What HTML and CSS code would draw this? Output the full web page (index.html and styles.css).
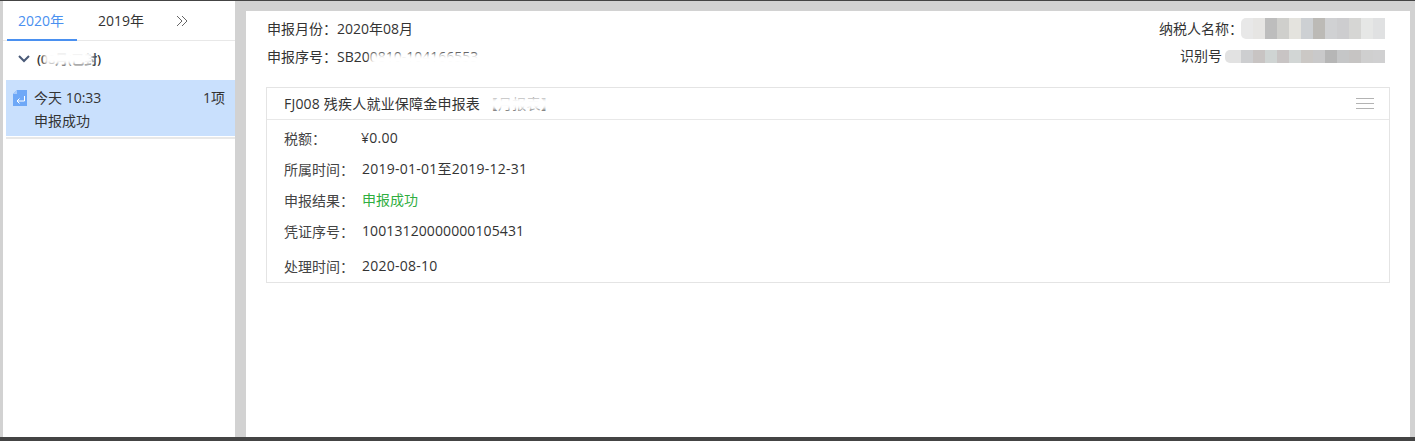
FILE: index.html
```html
<!DOCTYPE html>
<html lang="zh-CN">
<head>
    <meta charset="UTF-8">
    <title>申报记录</title>
    <meta name="viewport" content="width=device-width">
    <link rel="stylesheet" href="styles.css">
</head>
<body>
    <div class="page">
        <aside class="side">
            <div class="tabs">
                <span class="tab tab-on">2020年</span>
                <span class="tab tab-next">2019年</span>
                <svg class="tab-more" width="12" height="12" viewBox="0 0 12 12">
                    <path d="M1 1l5 5-5 5M6 1l5 5-5 5" fill="none" stroke="#666" stroke-width="1"/>
                </svg>
            </div>
            <div class="group">
                <svg class="group-arrow" width="12" height="8" viewBox="0 0 12 8">
                    <path d="M1 1l5 5 5-5" fill="none" stroke="#4a5a78" stroke-width="2"/>
                </svg>
                <span class="group-name">(08月(已封)</span>
                <i class="smear smear-group"></i>
            </div>
            <div class="item">
                <svg class="item-icon" width="14" height="16" viewBox="0 0 14 16">
                    <path d="M4 0h10v16H0V4z" fill="#6ea8f7"/>
                    <path d="M0 4h4V0z" fill="#a9cbfa"/>
                    <path d="M11.5 6v5H4M6.5 8.5L4 11l2.5 2.5" fill="none" stroke="#fff" stroke-width="1"/>
                </svg>
                <div class="item-row">
                    <span>今天 10:33</span>
                    <span>1项</span>
                </div>
                <div class="item-sub">申报成功</div>
            </div>
        </aside>
        <main class="main">
            <div class="head">
                <div class="head-col">
                    <div class="head-line">申报月份<span class="colon">：</span>2020年08月</div>
                    <div class="head-line head-serial">申报序号<span class="colon">：</span>SB200810-104166553<i class="smear smear-serial"></i></div>
                </div>
                <div class="head-col head-right">
                    <div class="head-line">纳税人名称<span class="colon">：</span><span class="mosaic mosaic-name">
                            <b style="background:#e8e8e8"></b><b style="background:#e6e5e3"></b><b style="background:#bdbdbd"></b><b style="background:#cfcfcc"></b><b style="background:#e4e3de"></b><b style="background:#cdd0d3"></b><b style="background:#bcbab6"></b><b style="background:#d0d1d3"></b><b style="background:#cdcdcf"></b><b style="background:#d6d6d4"></b><b style="background:#e6e7e6"></b><b style="background:#e0e1e2"></b>
                        </span></div>
                    <div class="head-line">识别号<span class="mosaic mosaic-id">
                            <b style="background:#e2e2e2"></b><b style="background:#cdced0"></b><b style="background:#c8c4c3"></b><b style="background:#cfd4d3"></b><b style="background:#c8c4c4"></b><b style="background:#d2d6d5"></b><b style="background:#cbc8c5"></b><b style="background:#c9c9ca"></b><b style="background:#b6b6b6"></b><b style="background:#c5c6c7"></b><b style="background:#c6c4c3"></b><b style="background:#cfcfcf"></b><b style="background:#d0d0d1"></b>
                        </span></div>
                </div>
            </div>
            <section class="card">
                <div class="card-title">
                    <span class="card-name">FJ008 残疾人就业保障金申报表 【月报表】<i class="smear smear-title"></i></span>
                    <span class="card-menu"><b></b><b></b><b></b></span>
                </div>
                <div class="card-body">
                    <div class="row row-tax"><span class="row-key">税额<span class="colon">：</span></span><span class="row-val">¥0.00</span></div>
                    <div class="row"><span class="row-key">所属时间<span class="colon">：</span></span><span class="row-val">2019-01-01至2019-12-31</span></div>
                    <div class="row"><span class="row-key">申报结果<span class="colon">：</span></span><span class="ok">申报成功</span></div>
                    <div class="row"><span class="row-key">凭证序号<span class="colon">：</span></span><span class="row-no">10013120000000105431</span></div>
                    <div class="row row-last"><span class="row-key">处理时间<span class="colon">：</span></span><span class="row-val">2020-08-10</span></div>
                </div>
            </section>
        </main>
    </div>
</body>
</html>
```

FILE: styles.css
```css
*,
*::after,
*::before{
    padding: 0;
    margin: 0;
    box-sizing: border-box;
}
html{
    font: normal 14px/20px "Open Sans", "Noto Sans CJK SC", sans-serif;
    color: #333;
}
body{
    width: 1415px;
    height: 441px;
    overflow: hidden;
    background-color: #d2d2d2;
}
.page{
    height: 441px;
    display: flex;
    padding: 0 5px 0 3px;
    border-top: 1px solid #444;
    border-bottom: 4px solid #444;
}
/* the centred colon only comes with the TC cut */
.colon{
    font-family: "Noto Sans CJK TC", sans-serif;
}
.side{
    width: 232px;
    background-color: #fff;
    margin-right: 11px;
    padding-top: 1px;
}
.tabs{
    height: 39px;
    display: flex;
    align-items: center;
    padding-left: 4px;
    border-bottom: 1px solid #e8e8e8;
}
.tab{
    width: 70px;
    height: 39px;
    line-height: 38px;
    text-align: center;
}
.tab-on{
    color: #4a90f0;
    border-bottom: 2px solid #4a90f0;
    padding-right: 2px;
}
.tab-next{
    margin-left: 9px;
}
.tab-more{
    margin-left: 20px;
}
.group{
    position: relative;
    height: 39px;
    display: flex;
    align-items: center;
    padding: 0 0 4px 15px;
    font-size: 13px;
    font-weight: 600;
    letter-spacing: -0.3px;
}
.group-arrow{
    margin-right: 7px;
}
.smear{
    position: absolute;
    background-color: #fff;
    filter: blur(2px);
}
.smear-group{
    left: 41px;
    top: 10px;
    width: 49px;
    height: 14px;
}
.item{
    position: relative;
    margin-left: 3px;
    height: 57px;
    padding: 8px 10px 0 28px;
    background-color: #c9e0fd;
    border-bottom: 1px solid #fff;
    box-shadow: 0 2px 0 #e8e8e8;
}
.item-icon{
    position: absolute;
    left: 7px;
    top: 10px;
}
.item-row{
    display: flex;
    justify-content: space-between;
}
.item-sub{
    margin-top: 3px;
}
.main{
    flex: 1;
    margin-top: 10px;
    background-color: #fff;
    padding: 7px 20px 0;
}
.head{
    display: flex;
    justify-content: space-between;
    padding-right: 5px;
}
.head-col{
    padding-left: 1px;
}
.head-right{
    text-align: right;
}
.head-line{
    position: relative;
    height: 28px;
    line-height: 20px;
}
.smear-serial{
    left: 103px;
    top: 8px;
    width: 122px;
    height: 12px;
}
.mosaic{
    display: inline-flex;
    vertical-align: top;
    height: 21px;
    border-radius: 5px 0 0 5px;
    overflow: hidden;
}
.mosaic b{
    display: block;
    flex: none;
    width: 12px;
}
.mosaic-name{
    margin: 0 0 0 -2px;
}
.mosaic-id{
    height: 13px;
    margin: 4px 0 0 3px;
}
.mosaic-id b:first-child{
    width: 16px;
}
.card{
    border: 1px solid #e4e4e4;
    margin-top: 13px;
}
.card-title{
    height: 32px;
    display: flex;
    align-items: center;
    justify-content: space-between;
    padding: 0 15px 0 17px;
    border-bottom: 1px solid #e8e8e8;
}
.card-name{
    position: relative;
    letter-spacing: 0.2px;
}
.smear-title{
    left: 204px;
    top: 3px;
    width: 62px;
    height: 13px;
}
.card-menu{
    display: flex;
    flex-direction: column;
    gap: 4px;
}
.card-menu b{
    display: block;
    width: 18px;
    height: 1px;
    background-color: #b3b3b3;
}
.card-body{
    padding: 7px 17px 0;
    height: 162px;
}
.row{
    display: flex;
    height: 31px;
    line-height: 22px;
}
.row-key{
    width: 78px;
    color: #444;
}
.row-val{
    letter-spacing: 0.25px;
}
.row-no{
    letter-spacing: 0.1px;
}
.row-tax .row-val{
    margin-left: -1px;
}
.row-last{
    margin-top: 4px;
}
.ok{
    color: #2fae3f;
}
```
